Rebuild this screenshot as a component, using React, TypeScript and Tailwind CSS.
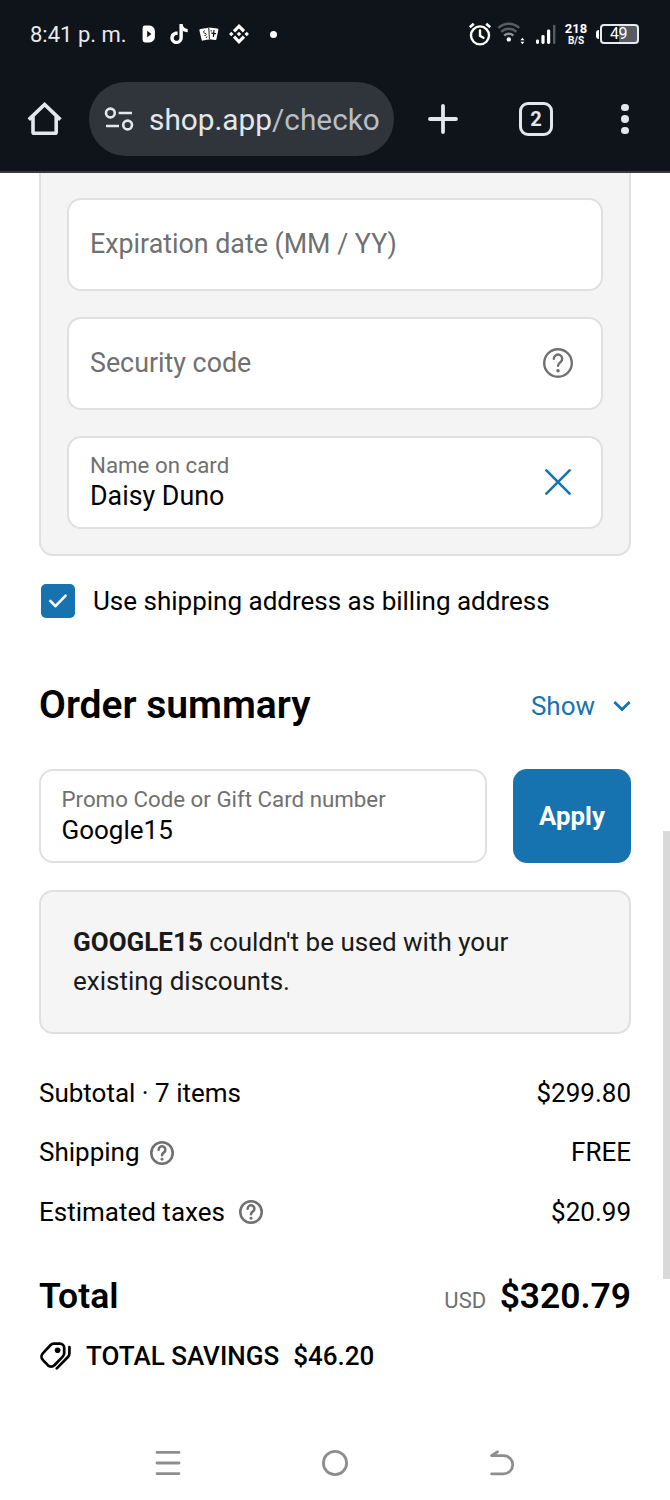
import type { ReactNode } from "react";
import clsx from "clsx";
import { SiBinance, SiTiktok } from "react-icons/si";

function HelpIcon({ className, strokeWidth }: { className: string; strokeWidth: number }) {
  return (
    <svg viewBox="0 0 30 30" fill="none" stroke="currentColor" strokeWidth={strokeWidth} className={className}>
      <circle cx="15" cy="15" r={15 - strokeWidth / 2} />
      <path d="M10.8 10.8a4.2 4.2 0 1 1 6.6 3.4c-1.6 1.1-2.4 1.8-2.4 3.6" strokeLinecap="round" />
      <circle cx="15" cy="22.8" r="1.8" fill="currentColor" stroke="none" />
    </svg>
  );
}

function StatusBar() {
  return (
    <div className="flex h-[68px] items-center pl-[30px] text-white">
      <span className="w-[112px] text-[22px] whitespace-nowrap text-[#e8eaed]">8:41 p. m.</span>
      <svg viewBox="0 0 13 18" className="h-[18px] w-[13px]">
        <path d="M3 .6h4.5a5.4 5.4 0 0 1 5.4 5.4v6a5.4 5.4 0 0 1-5.4 5.4H3a2.4 2.4 0 0 1-2.4-2.4V3A2.4 2.4 0 0 1 3 .6z" fill="#fff" />
        <path d="M5.2 5.8v6.4L9.4 9z" fill="#0f141b" />
      </svg>
      <SiTiktok className="mb-px ml-[14px] size-[20px]" />
      <svg viewBox="0 0 20 14" className="ml-[10px] h-[14px] w-[20px]">
        <path d="M1.4 2 9.6.8l1.2 11.4-7 1.4q-1 .2-1.2-.8L.4 3.4Q.2 2.2 1.4 2z" fill="#fff" />
        <path d="m9.8.6 8.6.8q1.2.2 1 1.4l-2 9.4q-.2 1-1.2.8l-7.6-1z" fill="#fff" />
        <path d="m9.8 1 .6 11M6 3.8c-2 0-2 2 0 2.4s1.6 2.6-.6 2.4M8.2 9.4 7 11" stroke="#0f141b" strokeWidth=".9" fill="none" />
        <path d="m15 3-.6 7M12.4 6.2l4.6.4M12.2 3.2v1.4" stroke="#0f141b" strokeWidth="1.2" fill="none" />
      </svg>
      <SiBinance className="ml-[10px] size-[20px]" />
      <span className="ml-[21px] size-[7px] rounded-full bg-white" />

      <svg viewBox="0 0 24 24" fill="none" stroke="#fff" strokeWidth="2.4" className="mb-px ml-[191px] size-[24px]">
        <circle cx="12" cy="13.4" r="9" />
        <path d="M12 8.4v5.4l3.4 2" strokeLinecap="round" />
        <path d="M1.8 5.2 5.8 1.8M22.2 5.2l-4-3.4" strokeWidth="2.6" />
      </svg>
      <svg viewBox="0 0 30 24" fill="none" strokeWidth="2.4" className="ml-[5px] h-[24px] w-[30px]">
        <path d="M1.4 6a15 15 0 0 1 20.8 0" stroke="#575c62" />
        <path d="M4.2 9.8a11 11 0 0 1 15.2 0" stroke="#575c62" />
        <path d="M7.2 13.6a6.8 6.8 0 0 1 9.2 0" stroke="#8b8f94" />
        <circle cx="11.8" cy="17.4" r="2.2" fill="#fff" />
        <path d="m23.4 18.2 2-2.4 2 2.4zM23.4 19.8l2 2.4 2-2.4z" fill="#fff" />
      </svg>
      <svg viewBox="0 0 20 21" className="ml-[9px] h-[21px] w-[20px]">
        <rect x="0" y="15.4" width="3" height="4.6" rx="1.4" fill="#fff" />
        <rect x="5.4" y="11" width="3.2" height="9" rx="1.4" fill="#fff" />
        <rect x="11" y="5.6" width="3.2" height="14.4" rx="1.4" fill="#fff" />
        <rect x="17" y=".8" width="2.4" height="19.2" rx="1" fill="#575c62" />
      </svg>
      <div className="ml-[8px] flex w-[24px] flex-col items-center font-bold">
        <span className="text-[13px] leading-[13px]">218</span>
        <span className="text-[10px] leading-[11px]">B/S</span>
      </div>
      <div className="ml-[8px] flex items-center">
        <span className="h-[9px] w-[3px] rounded-l bg-white" />
        <div className="ml-px flex h-[20px] w-[39px] items-center rounded-[4px] border-2 border-[#e8eaed] bg-linear-to-r from-transparent from-50% to-[#575c62] to-50% pl-[8px] text-[16px] tracking-[-0.4px]">
          49
        </div>
      </div>
    </div>
  );
}

function BrowserBar() {
  return (
    <div className="flex h-[102px] items-center pl-[27px] text-[#e3e6ec]">
      <svg viewBox="0 0 36 36" fill="none" stroke="currentColor" strokeWidth="3.6" className="size-[36px]">
        <path d="M1.8 18.6 17.6 3.4l15.8 15.2M6 15v16.2q0 1 1 1h21.2q1 0 1-1V15" />
      </svg>
      <div className="ml-[26px] flex h-[74px] w-[305px] items-center rounded-full bg-[#30353c] pl-[15px]">
        <svg viewBox="0 0 30 26" fill="none" stroke="currentColor" strokeWidth="2.6" className="h-[26px] w-[30px]">
          <circle cx="6.4" cy="7" r="4.4" />
          <path d="M14.6 7H28M2 20h13" />
          <circle cx="23.6" cy="19" r="4.4" />
        </svg>
        <span className="ml-[15px] pt-[2px] text-[29.8px] whitespace-nowrap">
          shop.app<span className="text-[#b9bec6]">/checko</span>
        </span>
      </div>
      <svg viewBox="0 0 30 30" stroke="currentColor" strokeWidth="3.8" strokeLinecap="round" className="ml-[34px] size-[30px]">
        <path d="M15 2v26M2 15h26" />
      </svg>
      <div className="ml-[61px] flex size-[34px] items-center justify-center rounded-[9px] border-[3.5px] border-current text-[20px] font-bold">
        2
      </div>
      <div className="ml-[68px] flex flex-col gap-[4px]">
        {[0, 1, 2].map((i) => (
          <span key={i} className="size-[7.5px] rounded-full bg-current" />
        ))}
      </div>
    </div>
  );
}

interface FieldProps {
  label: string;
  value?: string;
  className?: string;
  children?: ReactNode;
}

function Field({ label, value, className, children }: FieldProps) {
  return (
    <div className={clsx("flex items-center justify-between rounded-[14px] border-2 border-[#e0e0e0] bg-white", className)}>
      {value ? (
        <div className="flex flex-col">
          <span className="text-[22.3px] leading-[28px] text-[#707070]">{label}</span>
          <span className="leading-[34px]">{value}</span>
        </div>
      ) : (
        <span className="leading-[34px] text-[#707070]">{label}</span>
      )}
      {children}
    </div>
  );
}

function SummaryRow({ label, amount, help }: { label: string; amount: string; help?: string }) {
  return (
    <div className="flex h-[59.5px] items-center text-[26px]">
      <span>{label}</span>
      {help && <HelpIcon className={clsx("size-[24px] text-[#707070]", help)} strokeWidth={3.2} />}
      <span className="ml-auto">{amount}</span>
    </div>
  );
}

export default function App() {
  return (
    <div className="relative flex h-[1500px] w-[670px] flex-col overflow-hidden bg-white font-[Roboto,sans-serif] text-black">
      <header className="h-[173px] shrink-0 border-b-2 border-[#3b3a42] bg-[#0f141b]">
        <StatusBar />
        <BrowserBar />
      </header>

      <main className="flex flex-col px-[39px]">
        <section className="flex h-[383px] flex-col gap-[26px] rounded-b-[14px] border-2 border-t-0 border-[#e0e0e0] bg-[#f4f4f4] px-[26px] pt-[24.5px] text-[26.8px]">
          <Field label="Expiration date (MM / YY)" className="h-[93px] px-[21px]" />
          <Field label="Security code" className="h-[93px] pr-[28px] pl-[21px]">
            <HelpIcon className="size-[30px] text-[#707070]" strokeWidth={2.4} />
          </Field>
          <Field label="Name on card" value="Daisy Duno" className="h-[93px] pr-[30px] pl-[21px]">
            <svg viewBox="0 0 26 26" stroke="#1773b0" strokeWidth="2.6" strokeLinecap="round" className="size-[26px]">
              <path d="m1.4 1.4 23.2 23.2M24.6 1.4 1.4 24.6" />
            </svg>
          </Field>
        </section>

        <label className="mt-[28px] ml-[2px] flex h-[34px] items-center">
          <span className="flex size-[34px] items-center justify-center rounded-[5px] bg-[#1773b0]">
            <svg viewBox="0 0 18 14" fill="none" stroke="#fff" strokeWidth="2.6" className="h-[14px] w-[18px]">
              <path d="m1.4 7 5 5.2L16.6 1.6" strokeLinecap="round" strokeLinejoin="round" />
            </svg>
          </span>
          <span className="ml-[18px] text-[26px]">Use shipping address as billing address</span>
        </label>

        <div className="mt-[63px] flex h-[48px] items-center justify-between">
          <h2 className="text-[39px] font-semibold">Order summary</h2>
          <div className="flex items-center pt-[2px] text-[26px] text-[#1773b0]">
            Show
            <svg viewBox="0 0 18 12" fill="none" stroke="currentColor" strokeWidth="2.8" className="ml-[18px] h-[12px] w-[18px]">
              <path d="m1.4 2 7.6 7.6L16.6 2" />
            </svg>
          </div>
        </div>

        <div className="mt-[40px] flex gap-[26px] text-[26px]">
          <Field label="Promo Code or Gift Card number" value="Google15" className="h-[94px] w-[448px] px-[20.5px]" />
          <button className="h-[94px] w-[118px] rounded-[14px] bg-[#1773b0] pt-px text-[25.8px] font-bold text-white">Apply</button>
        </div>

        <div className="mt-[27px] h-[144px] rounded-[14px] border-2 border-[#e0e0e0] bg-[#f5f5f5] px-[32px] pt-[31px] text-[26px] leading-[39px] text-[#1a1a1a]">
          <b className="font-bold">GOOGLE15</b> couldn't be used with your
          <br />
          existing discounts.
        </div>

        <div className="mt-[29.5px] flex flex-col">
          <SummaryRow label="Subtotal · 7 items" amount="$299.80" />
          <SummaryRow label="Shipping" amount="FREE" help="ml-[10px]" />
          <SummaryRow label="Estimated taxes" amount="$20.99" help="ml-[14px]" />
        </div>

        <div className="mt-[29.5px] flex h-[48px] items-baseline font-semibold">
          <span className="text-[35.5px] leading-[48px]">Total</span>
          <span className="ml-auto text-[22px] font-normal text-[#707070]">USD</span>
          <span className="ml-[13.5px] text-[35.4px] leading-[48px]">$320.79</span>
        </div>

        <div className="mt-[19.5px] flex h-[34px] items-center text-[26px] font-medium">
          <svg viewBox="0 0 32 28" fill="none" stroke="currentColor" strokeWidth="2.7" strokeLinecap="round" strokeLinejoin="round" className="h-[28px] w-[32px]">
            <path d="M14.8 1.6h6a4.4 4.4 0 0 1 4.4 4.4v5c0 1.4-.5 2.6-1.5 3.6l-8.3 8.6a4.6 4.6 0 0 1-6.6 0l-5-5.4a4.6 4.6 0 0 1 0-6.4l7.8-8.4c.9-.9 2-1.4 3.2-1.4z" />
            <path d="M30.4 5v6.4c0 1.4-.5 2.6-1.5 3.6L17.8 26.4" />
            <circle cx="18.6" cy="8.2" r="2.8" fill="currentColor" stroke="none" />
          </svg>
          <span className="ml-[15px]">TOTAL SAVINGS</span>
          <span className="ml-[14px]">$46.20</span>
        </div>
      </main>

      <nav className="mt-auto flex h-[74px] items-center pl-[155px] text-[#8e8e8e]">
        <svg viewBox="0 0 26 26" stroke="currentColor" strokeWidth="2.8" strokeLinecap="round" className="size-[26px]">
          <path d="M2 2.4h22M2 13h22M2 23.6h22" />
        </svg>
        <svg viewBox="0 0 26 26" fill="none" stroke="currentColor" strokeWidth="2.8" className="ml-[141px] size-[26px]">
          <circle cx="13" cy="13" r="11.6" />
        </svg>
        <svg viewBox="0 0 26 26" fill="none" stroke="currentColor" strokeWidth="2.8" strokeLinecap="round" strokeLinejoin="round" className="ml-[141px] size-[26px]">
          <path d="M8.4 1.8 2.6 5.6h12a9 9 0 0 1 0 18.2H2.6" />
        </svg>
      </nav>

      {/* page scroll thumb */}
      <div className="absolute top-[831px] right-0 h-[448px] w-[7px] bg-[#d9d9d9]" />
    </div>
  );
}
